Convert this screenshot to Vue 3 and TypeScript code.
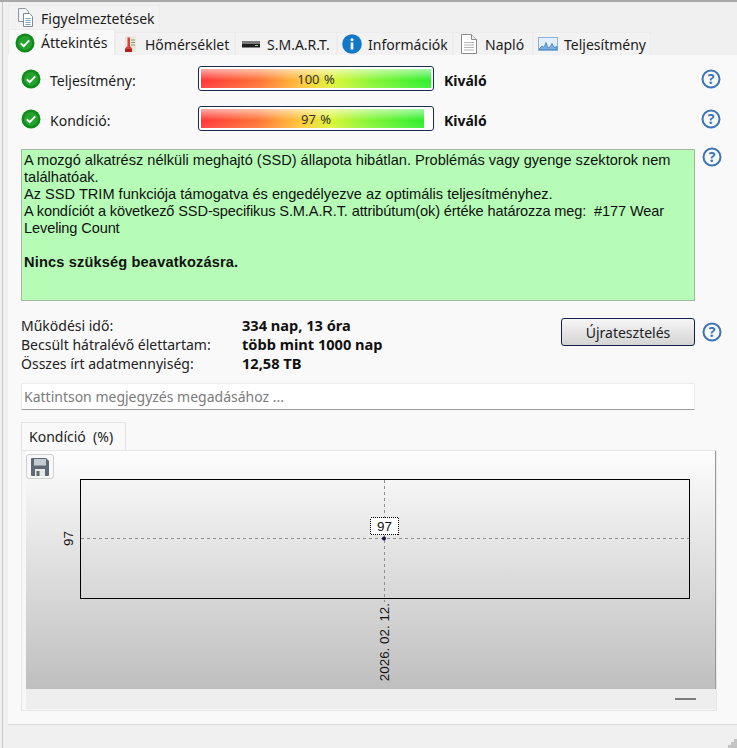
<template>
  <div class="app">
    <div class="tabs-top">
      <div class="tab tab-top">
        <svg class="tab-icon" viewBox="0 0 20 20">
          <path d="M1.500 0.500h7l3 3v10h-10z" fill="#f4f6f9" stroke="#8d97a6" />
          <path d="M6.500 5.500h6l3 3v10h-9z" fill="#fff" stroke="#7f8a9b" />
          <path d="M8.500 10.500h5M8.500 12.500h5M8.500 14.500h5M8.500 16.500h5" stroke="#7da0c4" />
        </svg>
        <span>Figyelmeztetések</span>
      </div>
    </div>

    <div class="tabs-main">
      <div
        v-for="tab in tabs"
        :key="tab.label"
        class="tab"
        :class="['tab-' + tab.icon, { active: tab.active }]"
        :style="{ width: tab.width + 'px' }"
      >
        <svg v-if="tab.icon === 'ok'" class="tab-icon" viewBox="0 0 20 20">
          <circle cx="10" cy="10" r="9.500" fill="#0f8a1a" />
          <circle cx="10" cy="10" r="7" fill="#23a32c" />
          <path d="M5.800 10.300l2.900 2.800 5.500-5.700" fill="none" stroke="#fff" stroke-width="2" />
        </svg>
        <svg v-else-if="tab.icon === 'temp'" class="tab-icon" viewBox="0 0 20 20">
          <path d="M3 2h11v16H3z" fill="#ece6de" />
          <path d="M9 6h4M9 8.500h4M9 11h4" stroke="#7f9f62" />
          <path d="M5.500 3.500h2.500v8.500l2 2.500v3.500H3v-3.500l2.500-2.500z" fill="#d8413a" />
          <path d="M3 15h7v3H3z" fill="#a9221d" />
        </svg>
        <svg v-else-if="tab.icon === 'drive'" class="tab-icon" viewBox="0 0 20 20">
          <rect x="0" y="7" width="18" height="3" fill="#7a7a7a" />
          <rect x="0" y="10" width="18" height="3.500" fill="#1e1e1e" />
          <rect x="13" y="11" width="3" height="1" fill="#8fd08f" />
        </svg>
        <svg v-else-if="tab.icon === 'info'" class="tab-icon" viewBox="0 0 20 20">
          <circle cx="10" cy="10" r="9.800" fill="#1478c8" />
          <rect x="8.700" y="8.500" width="2.600" height="7" fill="#fff" />
          <circle cx="10" cy="5.800" r="1.500" fill="#fff" />
        </svg>
        <svg v-else-if="tab.icon === 'log'" class="tab-icon" viewBox="0 0 20 20">
          <path d="M0.500 0.500h10l5 5v14h-15z" fill="#fff" stroke="#8a8a8a" />
          <path d="M10.500 0.500v5h5" fill="#eee" stroke="#8a8a8a" />
          <path d="M3 8.500h10M3 11h10M3 13.500h10M3 16h10" stroke="#b5b5b5" />
        </svg>
        <svg v-else-if="tab.icon === 'perf'" class="tab-icon" viewBox="0 0 20 20">
          <rect x="0.500" y="3.500" width="19" height="13" fill="#e2eefa" stroke="#8db4dc" />
          <path d="M1 15l3-3 2 1.500 2-5 2 5.500 2-1 2-3.500 2 4 3-1v3H1z" fill="#7fb0e2" stroke="#2f72b8" stroke-width="0.700" />
        </svg>
        <span>{{ tab.label }}</span>
      </div>
    </div>

    <div class="panel">
      <div v-for="bar in bars" :key="bar.label" class="status-row">
        <svg class="check" viewBox="0 0 20 20">
          <circle cx="10" cy="10" r="9.500" fill="#0f8a1a" />
          <circle cx="10" cy="10" r="7" fill="#23a32c" />
          <path d="M5.800 10.300l2.900 2.800 5.500-5.700" fill="none" stroke="#fff" stroke-width="2" />
        </svg>
        <span class="status-label">{{ bar.label }}</span>
        <div class="bar">
          <div class="bar-fill" :style="{ width: bar.fill + 'px' }"></div>
          <span class="bar-text">{{ bar.value }} %</span>
        </div>
        <b class="status-word">Kiváló</b>
        <svg class="help push" viewBox="0 0 20 20">
          <circle cx="10" cy="10" r="8.500" fill="#f6f8fb" stroke="#3d74b4" stroke-width="2" />
          <text x="10" y="15" text-anchor="middle" class="help-mark">?</text>
        </svg>
      </div>

      <div class="message-row">
        <div class="message">
          A mozgó alkatrész nélküli meghajtó (SSD) állapota hibátlan. Problémás vagy gyenge szektorok nem találhatóak.<br />
          Az SSD TRIM funkciója támogatva és engedélyezve az optimális teljesítményhez.<br />
          <span class="tight">A kondíciót a következő SSD-specifikus S.M.A.R.T. attribútum(ok) értéke határozza meg:&nbsp; #177 Wear Leveling Count</span><br /><br />
          <b>Nincs szükség beavatkozásra.</b>
        </div>
        <svg class="help" viewBox="0 0 20 20">
          <circle cx="10" cy="10" r="8.500" fill="#f6f8fb" stroke="#3d74b4" stroke-width="2" />
          <text x="10" y="15" text-anchor="middle" class="help-mark">?</text>
        </svg>
      </div>

      <div class="stats-row">
        <div class="stats">
          <template v-for="stat in stats" :key="stat.label">
            <span>{{ stat.label }}</span>
            <b>{{ stat.value }}</b>
          </template>
        </div>
        <button class="retest">Újratesztelés</button>
        <svg class="help" viewBox="0 0 20 20">
          <circle cx="10" cy="10" r="8.500" fill="#f6f8fb" stroke="#3d74b4" stroke-width="2" />
          <text x="10" y="15" text-anchor="middle" class="help-mark">?</text>
        </svg>
      </div>

      <div class="note">Kattintson megjegyzés megadásához ...</div>

      <div class="sub-tab">Kondíció&nbsp;&nbsp;(%)</div>
      <div class="chart-box">
        <button class="save" aria-label="Mentés">
          <svg viewBox="0 0 18 18" width="18" height="18">
            <path d="M0 1a1 1 0 0 1 1-1h14l3 3v14a1 1 0 0 1-1 1H1a1 1 0 0 1-1-1z" fill="#5f6872" />
            <rect x="3" y="1" width="12" height="6.500" fill="#c4cad1" />
            <rect x="4" y="11" width="10" height="7" fill="#e6e8ea" />
            <rect x="5.500" y="13" width="3" height="5" fill="#5f6872" />
          </svg>
        </button>
        <svg class="chart" viewBox="0 0 690 238" width="690" height="238">
          <defs>
            <linearGradient id="chart-bg" x1="0" y1="0" x2="0" y2="1">
              <stop offset="0" stop-color="#fdfdfd" />
              <stop offset="1" stop-color="#bfbfbf" />
            </linearGradient>
          </defs>
          <rect width="690" height="238" fill="url(#chart-bg)" />
          <path d="M689.500 0v238" stroke="#9a9a9a" />
          <rect x="54.500" y="28.500" width="609" height="119" fill="none" stroke="#000" />
          <path d="M55 87.500h608M358.500 29v122" stroke="#8f8f8f" stroke-dasharray="3 3" fill="none" />
          <circle cx="358" cy="87.500" r="2" fill="#10104a" />
          <rect x="344.500" y="66.500" width="28" height="17" fill="#fff" stroke="#000" stroke-dasharray="1 1" shape-rendering="crispEdges" />
          <text x="358.500" y="80" text-anchor="middle" class="chart-text">97</text>
          <text transform="translate(46.500 87.500) rotate(-90)" text-anchor="middle" class="chart-text">97</text>
          <text transform="translate(362.500 152) rotate(-90)" text-anchor="end" class="chart-text">2026. 02. 12.</text>
        </svg>
        <div class="chart-foot"><i class="dash"></i></div>
      </div>
    </div>

    <svg class="grip" viewBox="0 0 9 9" width="9" height="9">
      <path d="M6 0h3v3H6zM3 3h3v3H3zM6 3h3v3H6zM0 6h3v3H0zM3 6h3v3H3zM6 6h3v3H6z" fill="#c4c4c4" />
    </svg>
  </div>
</template>

<script setup lang="ts">
interface Tab {
  label: string
  icon: string
  width: number
  active?: boolean
}

const tabs: Tab[] = [
  { label: 'Áttekintés', icon: 'ok', width: 107, active: true },
  { label: 'Hőmérséklet', icon: 'temp', width: 120 },
  { label: 'S.M.A.R.T.', icon: 'drive', width: 102 },
  { label: 'Információk', icon: 'info', width: 116 },
  { label: 'Napló', icon: 'log', width: 80 },
  { label: 'Teljesítmény', icon: 'perf', width: 118 },
]

const bars = [
  { label: 'Teljesítmény:', value: 100, fill: 230 },
  { label: 'Kondíció:', value: 97, fill: 223 },
]

const stats = [
  { label: 'Működési idő:', value: '334 nap, 13 óra' },
  { label: 'Becsült hátralévő élettartam:', value: 'több mint 1000 nap' },
  { label: 'Összes írt adatmennyiség:', value: '12,58 TB' },
]
</script>

<style>
html,
body {
  margin: 0;
  background: #f0f0f0;
}
</style>

<style scoped>
.app {
  position: relative;
  width: 737px;
  height: 748px;
  box-sizing: border-box;
  overflow: hidden;
  padding-top: 3px;
  background: #f0f0f0;
  border-top: 2px solid #a9a9a9;
  font-family: "Noto Sans", "Open Sans", sans-serif;
  font-size: 14px;
  color: #1c1c1c;
}

.app::before {
  content: "";
  position: absolute;
  top: 0;
  bottom: 0;
  left: 2px;
  width: 1px;
  background: #c9c9c9;
}

.tabs-top {
  padding-left: 8px;
  height: 25px;
}

.tabs-main {
  display: flex;
  padding-left: 8px;
  height: 25px;
}

.tab {
  display: flex;
  align-items: center;
  gap: 6px;
  box-sizing: border-box;
  height: 23px;
  margin-top: 2px;
  padding-left: 4px;
  background: #f2f2f2;
  border: 1px solid #ececec;
  border-bottom: none;
  white-space: nowrap;
}

.tab-top {
  width: 152px;
  height: 100%;
  margin-top: 0;
  padding-left: 8px;
  gap: 4px;
}

.tab.active {
  height: 26px;
  margin-top: -1px;
  padding-left: 6px;
  gap: 6px;
  background: #f9f9f9;
}

.tab-temp {
  padding-left: 6px;
  gap: 3px;
}

.tab-drive {
  padding-left: 6px;
  gap: 5px;
}

.tab-log {
  padding-left: 7px;
  gap: 4px;
}

.tab-icon {
  width: 20px;
  height: 20px;
  flex: none;
}

.panel {
  margin-left: 8px;
  height: 670px;
  box-sizing: border-box;
  padding: 11px 16px 0 13px;
  background: #f9f9f9;
  border-bottom: 1px solid #dcdcdc;
}

.status-row {
  display: flex;
  align-items: center;
  height: 25px;
  margin-bottom: 15px;
}

.check {
  width: 20px;
  height: 20px;
  flex: none;
  margin-right: 9px;
}

.status-label {
  width: 148px;
  flex: none;
  padding-top: 3px;
}

.bar {
  position: relative;
  width: 236px;
  height: 25px;
  flex: none;
  box-sizing: border-box;
  padding: 2px;
  background: #fff;
  border: 1px solid #1a2c48;
  border-radius: 3px;
}

.bar-fill {
  height: 100%;
  background:
    linear-gradient(rgba(255, 255, 255, 0.6), rgba(255, 255, 255, 0.05) 60%, rgba(255, 255, 255, 0.15)),
    linear-gradient(90deg, #ff2a2a 0%, #ff6a2a 25%, #ffc52a 45%, #d8f52a 58%, #80f52a 75%, #20ee20 100%);
}

.bar-text {
  position: absolute;
  inset: 0;
  display: flex;
  align-items: center;
  justify-content: center;
  font-size: 13px;
  word-spacing: 1px;
  color: #333;
}

.status-word {
  margin-left: 10px;
  padding-top: 3px;
  font-weight: 700;
  color: #111;
}

.help {
  width: 20px;
  height: 20px;
  flex: none;
}

.push {
  margin-left: auto;
}

.help-mark {
  font-family: "Noto Sans", sans-serif;
  font-size: 14px;
  font-weight: 700;
  fill: #3d74b4;
}

.message-row {
  display: flex;
  gap: 7px;
  margin-top: 18px;
}

.message-row > .help {
  margin-top: -2px;
}

.message {
  width: 674px;
  height: 152px;
  flex: none;
  box-sizing: border-box;
  padding: 2px 8px 0 2px;
  background: #b6fcb6;
  border: 1px solid #a5b8a5;
  font-family: "Liberation Sans", Arial, sans-serif;
  font-size: 14.6px;
  line-height: 17px;
  color: #111;
}

.message b {
  letter-spacing: 0.15px;
}

.tight {
  letter-spacing: -0.13px;
}

.stats-row {
  display: flex;
  align-items: center;
  gap: 7px;
  margin-top: 15px;
  height: 56px;
}

.stats {
  display: grid;
  grid-template-columns: 221px auto;
  line-height: 19px;
  width: 533px;
  flex: none;
  color: #222;
  align-self: flex-start;
}

.stats b {
  font-size: 14.6px;
  color: #111;
}

.retest {
  width: 134px;
  height: 28px;
  flex: none;
  align-self: flex-start;
  margin-top: 2px;
  font: inherit;
  color: #222;
  background: linear-gradient(#f6f6f6, #d4d4d4);
  border: 1px solid #14204a;
  border-radius: 3px;
}

.stats-row > .help {
  align-self: flex-start;
  margin-top: 6px;
}

.note {
  width: 674px;
  height: 27px;
  box-sizing: border-box;
  margin-top: 11px;
  padding-left: 2px;
  line-height: 26px;
  color: #7b7b7b;
  background: #fff;
  border: 1px solid #ececec;
  border-bottom-color: #9c9c9c;
}

.sub-tab {
  width: 105px;
  height: 28px;
  box-sizing: border-box;
  margin-top: 12px;
  padding-left: 7px;
  line-height: 27px;
  background: #f9f9f9;
  border: 1px solid #e4e4e4;
  border-bottom: none;
}

.chart-box {
  position: relative;
  width: 696px;
  height: 261px;
  box-sizing: border-box;
  padding-left: 4px;
  border: 1px solid #e6e6e6;
  background: #f7f7f7;
}

.chart {
  display: block;
}

.save {
  position: absolute;
  top: 3px;
  left: 4px;
  display: flex;
  align-items: center;
  justify-content: center;
  width: 28px;
  height: 25px;
  padding: 0;
  background: #f8f8f8;
  border: 1px solid #cfcfcf;
  border-radius: 3px;
}

.chart-text {
  font-family: "Liberation Sans", Arial, sans-serif;
  font-size: 13.4px;
  fill: #111;
}

.chart-foot {
  display: flex;
  align-items: center;
  justify-content: flex-end;
  height: 20px;
  padding-right: 20px;
  background: #eeeeee;
}

.dash {
  width: 21px;
  height: 2px;
  background: #7d7d7d;
}

.grip {
  position: absolute;
  right: 0;
  bottom: 0;
}
</style>
